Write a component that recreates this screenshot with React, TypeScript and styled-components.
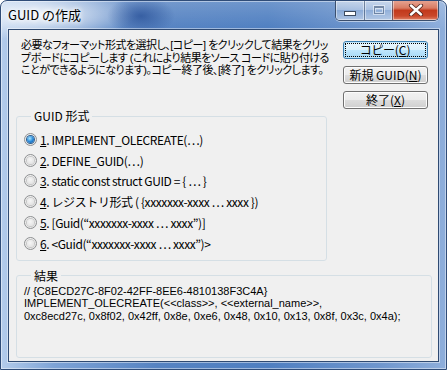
import React from "react";
import styled, { createGlobalStyle } from "styled-components";

const GlobalStyle = createGlobalStyle`
  html, body {
    margin: 0;
    padding: 0;
    background: #ffffff;
  }
  body {
    font-family: "Noto Sans CJK JP", "Liberation Sans", sans-serif;
    font-size: 12px;
    color: #000;
  }
`;

const formats = [
  { key: "1", label: ". IMPLEMENT_OLECREATE(…)" },
  { key: "2", label: ". DEFINE_GUID(…)" },
  { key: "3", label: ". static const struct GUID = { … }" },
  { key: "4", label: ". レジストリ形式 ( {xxxxxxx-xxxx … xxxx })" },
  { key: "5", label: ". [Guid(“xxxxxxx-xxxx … xxxx”)]" },
  { key: "6", label: ". <Guid(“xxxxxxx-xxxx … xxxx”)>" },
];

const description = [
  "必要なフォーマット形式を選択し、[コピー] をクリックして結果をクリッ",
  "プボードにコピーします (これにより結果をソース コードに貼り付ける",
  "ことができるようになります)。コピー終了後、[終了] をクリックします。",
];

const result = [
  "// {C8ECD27C-8F02-42FF-8EE6-4810138F3C4A}",
  "IMPLEMENT_OLECREATE(<<class>>, <<external_name>>,",
  "0xc8ecd27c, 0x8f02, 0x42ff, 0x8e, 0xe6, 0x48, 0x10, 0x13, 0x8f, 0x3c, 0x4a);",
];

function App() {
  const selected = "1";

  return (
    <>
      <GlobalStyle />
      <Window>
        <TitleBar>
          <Title>GUID の作成</Title>
          <CaptionButtons>
            <CaptionButton $w={28}>
              <MinGlyph />
            </CaptionButton>
            <CaptionButton $w={28}>
              <MaxGlyph />
            </CaptionButton>
            <CaptionButton $w={46} $close>
              <svg width="16" height="12" viewBox="0 0 16 12">
                <path
                  d="M3 1.5 L13 10.5 M13 1.5 L3 10.5"
                  stroke="#5a2a22"
                  strokeWidth="4.2"
                  strokeLinecap="round"
                />
                <path
                  d="M3 1.5 L13 10.5 M13 1.5 L3 10.5"
                  stroke="#ffffff"
                  strokeWidth="2.4"
                  strokeLinecap="round"
                />
              </svg>
            </CaptionButton>
          </CaptionButtons>
        </TitleBar>

        <Client>
          <TopRow>
            <Description>
              {description.map((line, i) => (
                <DescLine key={i}>{line}</DescLine>
              ))}
            </Description>
            <ButtonColumn>
              <PushButton $default>
                コピー(<Mnemonic>C</Mnemonic>)
              </PushButton>
              <PushButton>
                新規 GUID(<Mnemonic>N</Mnemonic>)
              </PushButton>
              <PushButton>
                終了(<Mnemonic>X</Mnemonic>)
              </PushButton>
            </ButtonColumn>
          </TopRow>

          <FormatGroup>
            <GroupLabel>GUID 形式</GroupLabel>
            <RadioList>
              {formats.map((f) => (
                <RadioRow key={f.key}>
                  <Radio $checked={f.key === selected} />
                  <span>
                    <Mnemonic>{f.key}</Mnemonic>
                    {f.label}
                  </span>
                </RadioRow>
              ))}
            </RadioList>
          </FormatGroup>

          <ResultGroup>
            <GroupLabel>結果</GroupLabel>
            <ResultText>
              {result.map((line, i) => (
                <div key={i}>{line}</div>
              ))}
            </ResultText>
          </ResultGroup>
        </Client>
      </Window>
    </>
  );
}

export default App;

const Window = styled.div`
  width: 447px;
  height: 370px;
  box-sizing: border-box;
  display: flex;
  flex-direction: column;
  border: 1px solid #2f4c78;
  border-radius: 7px 7px 0 0;
  overflow: hidden;
  background: radial-gradient(
      ellipse 34px 20px at 140px 15px,
      rgba(38, 78, 150, 0.75),
      rgba(38, 78, 150, 0)
    ),
    radial-gradient(
      ellipse 95px 26px at 40px 14px,
      rgba(255, 255, 255, 0.9),
      rgba(255, 255, 255, 0)
    ),
    linear-gradient(
      to bottom,
      rgba(255, 255, 255, 0.18),
      rgba(255, 255, 255, 0) 28px
    ),
    linear-gradient(
      to right,
      #b4cceb 0%,
      #7ea3d6 12%,
      #5683c2 35%,
      #4f7fc1 60%,
      #6f96cd 85%,
      #8eaedb 100%
    );
  box-shadow: inset 0 0 0 1px rgba(255, 255, 255, 0.45);
`;

const TitleBar = styled.div`
  height: 28px;
  flex: none;
  display: flex;
  align-items: flex-start;
`;

const Title = styled.div`
  margin: 6px 0 0 7px;
  font-size: 13px;
  line-height: 16px;
  color: #000;
  text-shadow: 0 0 4px #fff, 0 0 6px #fff;
`;

const CaptionButtons = styled.div`
  margin: -1px 7px 0 auto;
  display: flex;
  height: 20px;
  border: 1px solid #3b4f6e;
  border-top: none;
  border-radius: 0 0 5px 5px;
  overflow: hidden;
  box-shadow: 0 1px 0 rgba(255, 255, 255, 0.5);
`;

const CaptionButton = styled.div<{ $w: number; $close?: boolean }>`
  width: ${(p) => p.$w}px;
  display: flex;
  align-items: center;
  justify-content: center;
  box-sizing: border-box;
  border-left: 1px solid rgba(60, 80, 110, 0.6);
  &:first-child {
    border-left: none;
  }
  background: ${(p) =>
    p.$close
      ? "linear-gradient(#e8a796 0%, #d97b63 40%, #c2391c 52%, #c9472a 80%, #e0856a 100%)"
      : "linear-gradient(rgba(255,255,255,0.55) 0%, rgba(255,255,255,0.35) 48%, rgba(190,210,235,0.25) 52%, rgba(255,255,255,0.45) 100%)"};
  box-shadow: inset 0 0 0 1px rgba(255, 255, 255, 0.45);
`;

const MinGlyph = styled.div`
  width: 10px;
  height: 3px;
  margin-top: 6px;
  background: #fff;
  border: 1px solid #3c4a5e;
`;

const MaxGlyph = styled.div`
  width: 10px;
  height: 8px;
  box-sizing: border-box;
  border: 1px solid rgba(90, 110, 140, 0.7);
  border-top-width: 2px;
  box-shadow: 0 0 0 1px rgba(255, 255, 255, 0.5),
    inset 0 0 0 1px rgba(255, 255, 255, 0.5);
`;

const Client = styled.div`
  flex: 1;
  margin: 0 7px 7px;
  box-sizing: border-box;
  background: #f0f0f0;
  border: 1px solid #2f4a72;
  box-shadow: 0 0 0 1px rgba(255, 255, 255, 0.45);
  display: flex;
  flex-direction: column;
  padding: 0 6px 3px 7px;
`;

const TopRow = styled.div`
  height: 79px;
  flex: none;
  display: flex;
  justify-content: space-between;
  align-items: flex-start;
`;

const Description = styled.div`
  margin: 9px 0 0 5px;
  min-width: 0;
  display: flex;
  flex-direction: column;
`;

const DescLine = styled.div`
  height: 12.6px;
  white-space: nowrap;
  font-family: "Liberation Sans", "Noto Sans CJK JP", sans-serif;
  font-size: 11px;
  line-height: 12.6px;
  letter-spacing: -0.5px;
  font-feature-settings: "palt";
`;

const ButtonColumn = styled.div`
  flex: none;
  margin: 11px 4px 0 0;
  display: flex;
  flex-direction: column;
  gap: 7px;
`;

const PushButton = styled.div<{ $default?: boolean }>`
  position: relative;
  width: 85px;
  height: 18px;
  box-sizing: border-box;
  display: flex;
  align-items: center;
  justify-content: center;
  font-size: 12px;
  line-height: 14px;
  font-feature-settings: "palt";
  border-radius: 3px;
  border: 1px solid ${(p) => (p.$default ? "#3c7fb1" : "#707070")};
  background: ${(p) =>
    p.$default
      ? "linear-gradient(#eaf6fd 0%, #d9f0fc 50%, #bee6fd 50%, #a7d9f5 100%)"
      : "linear-gradient(#f2f2f2 0%, #ebebeb 50%, #dddddd 50%, #cfcfcf 100%)"};
  box-shadow: inset 0 0 0 1px ${(p) => (p.$default ? "#c0e6fa" : "#fcfcfc")};

  &::after {
    content: "";
    display: ${(p) => (p.$default ? "block" : "none")};
    position: absolute;
    inset: 1px;
    border: 1px dotted #000;
  }
`;

const Mnemonic = styled.span`
  text-decoration: underline;
  text-underline-offset: 1px;
`;

const FormatGroup = styled.fieldset`
  width: 311px;
  box-sizing: border-box;
  margin: 0;
  padding: 0 0 6px 7px;
  border: 1px solid #d5dfe5;
  border-radius: 3px;
`;

const ResultGroup = styled.fieldset`
  flex: 1;
  margin: 8px 0 0;
  padding: 2px 7px 0;
  border: 1px solid #d5dfe5;
  border-radius: 3px;
`;

const GroupLabel = styled.legend`
  margin-left: 7px;
  padding: 0 3px;
  font-size: 12px;
  line-height: 14px;
`;

const RadioList = styled.div`
  padding-top: 6px;
  display: flex;
  flex-direction: column;
`;

const RadioRow = styled.div`
  height: 20.8px;
  display: flex;
  align-items: center;
  gap: 3px;
  font-size: 12px;
  letter-spacing: -0.4px;
  white-space: nowrap;
`;

const Radio = styled.span<{ $checked?: boolean }>`
  width: 13px;
  height: 13px;
  flex: none;
  box-sizing: border-box;
  border-radius: 50%;
  border: 1px solid #8d8f91;
  background: radial-gradient(circle at 45% 40%, #ffffff, #e9e9e9 65%, #d2d2d2);
  display: flex;
  align-items: center;
  justify-content: center;

  &::after {
    content: "";
    width: 7px;
    height: 7px;
    border-radius: 50%;
    background: ${(p) =>
      p.$checked
        ? "radial-gradient(circle at 40% 35%, #a9e7ff 0%, #2b8ad9 50%, #0b4f9c 100%)"
        : "radial-gradient(circle at 45% 40%, #f6f6f6, #dcdcdc)"};
    box-shadow: ${(p) =>
      p.$checked ? "0 0 0 1px #2d5e8e" : "0 0 0 1px #c6c6c6"};
  }
`;

const ResultText = styled.div`
  font-family: "Liberation Sans", Arial, sans-serif;
  font-size: 11px;
  line-height: 12.6px;
  white-space: nowrap;
`;
